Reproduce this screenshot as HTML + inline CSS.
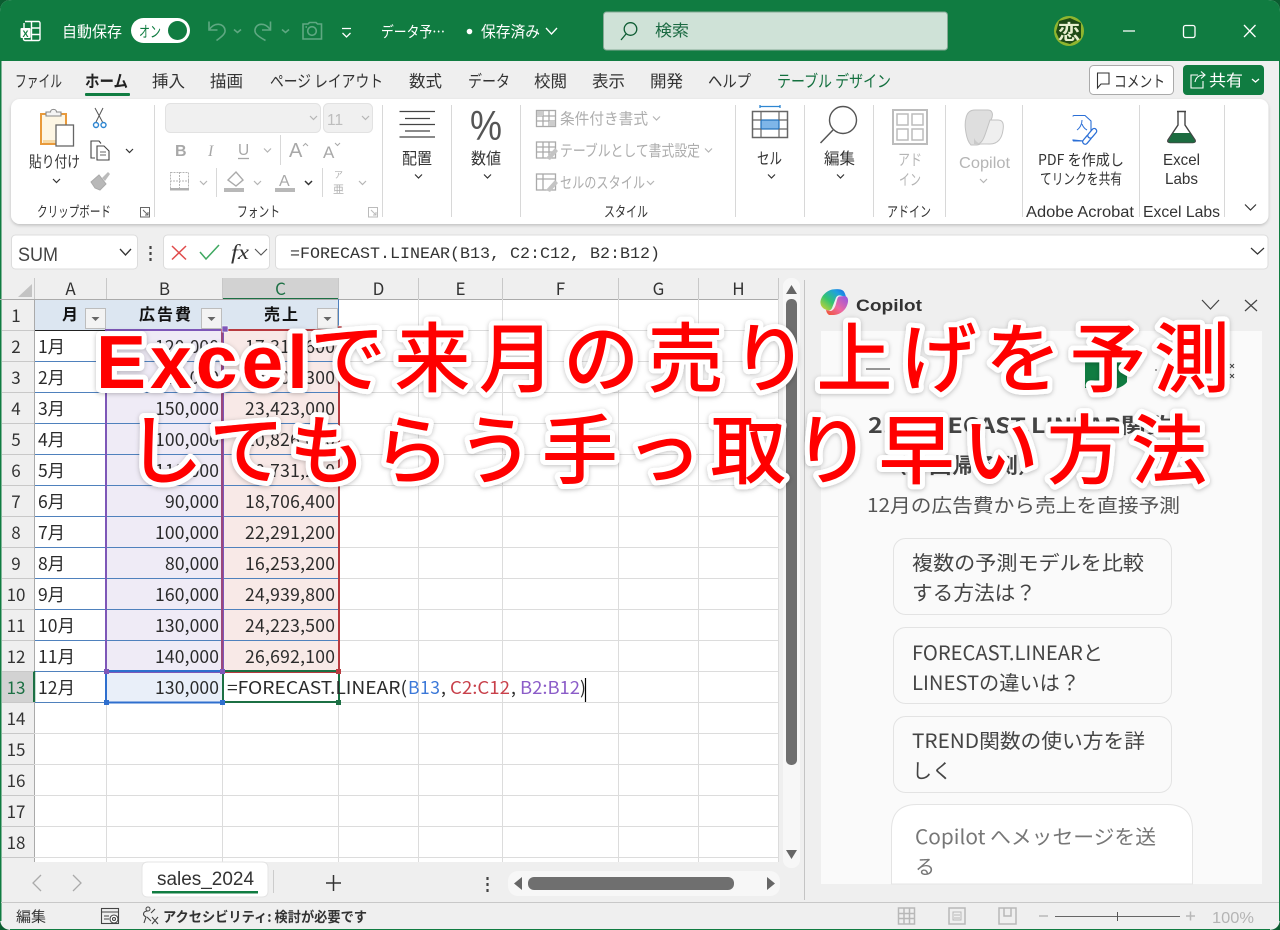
<!DOCTYPE html>
<html lang="ja"><head><meta charset="utf-8"><title>Excel</title>
<style>
html,body{margin:0;padding:0;background:#0b5c30;width:1280px;height:930px;overflow:hidden}
svg{display:block}
text{font-family:"Liberation Sans","Noto Sans CJK JP",sans-serif;white-space:pre}
.j{font-family:"Noto Sans CJK JP","Liberation Sans",sans-serif}
.c{font-family:"Noto Sans CJK JP","Liberation Sans",sans-serif;font-size:17.5px;fill:#2a2a2a}
.h{font-family:"Noto Sans CJK JP","Liberation Sans",sans-serif;font-size:17px;fill:#333;text-anchor:middle}
.rh{font-family:"Noto Sans CJK JP","Liberation Sans",sans-serif;font-size:17px;fill:#333;text-anchor:middle}
.gl{stroke:#dcdcdc;stroke-width:1;fill:none}
.ch{fill:none;stroke:#333;stroke-width:1.2}
.chg{fill:none;stroke:#b5b5b5;stroke-width:1.2}
.ttl{font-family:"Noto Sans CJK JP","Liberation Sans",sans-serif;font-weight:500;font-size:76px;fill:#ff0000;stroke:#fff;stroke-width:10px;stroke-linejoin:round;paint-order:stroke fill}
</style></head><body>
<svg xmlns="http://www.w3.org/2000/svg" width="1280" height="930" viewBox="0 0 1280 930">
<defs>
<filter id="sh" x="-5%" y="-10%" width="110%" height="125%"><feDropShadow dx="0" dy="1.5" stdDeviation="1.5" flood-color="#000" flood-opacity=".2"/></filter>
<filter id="tsh" x="-5%" y="-20%" width="110%" height="140%"><feDropShadow dx="0" dy="1" stdDeviation="2.500" flood-color="#000" flood-opacity=".25"/></filter>
<linearGradient id="cg1" x1="0" y1="1" x2="1" y2="0"><stop offset="0" stop-color="#e2d22e"/><stop offset=".4" stop-color="#35c56f"/><stop offset=".75" stop-color="#1f9fe0"/><stop offset="1" stop-color="#1d62e6"/></linearGradient>
<linearGradient id="cg2" x1="0" y1="1" x2="1" y2="0"><stop offset="0" stop-color="#f0532d"/><stop offset=".45" stop-color="#ee6aa0"/><stop offset="1" stop-color="#8f55e6"/></linearGradient>
</defs>

<!-- window body -->
<path d="M12 0H1268Q1280 0 1280 12V918Q1280 930 1268 930H12Q0 930 0 918V12Q0 0 12 0Z" fill="#efefef"/>
<path d="M12 0H1268Q1280 0 1280 12V61H0V12Q0 0 12 0Z" fill="#107c41"/>
<rect x="0" y="61" width="1.5" height="860" fill="#107c41"/>
<rect x="1279" y="61" width="1" height="860" fill="#107c41"/>
<rect x="10" y="929" width="1260" height="1" fill="#107c41"/>

<!-- title bar -->
<g fill="none" stroke="#fff" stroke-width="1.4"><path d="M25 21.500H38.500a1.500 1.500 0 0 1 1.500 1.500V39a1.500 1.500 0 0 1-1.500 1.500H25a1.500 1.500 0 0 1-1.500-1.500V35"/><path d="M24 28V23M31.500 21.500V40.500M31.500 28H40M31.500 34.500H40"/></g>
<rect x="20.500" y="28" width="10" height="10" rx="1" fill="#fff"/><text x="22.500" y="37" font-size="9" font-weight="700" fill="#107c41">X</text>
<text class="j" x="62" y="37" font-size="15.500" fill="#fff" textLength="60" lengthAdjust="spacingAndGlyphs">自動保存</text>
<rect x="131" y="18" width="59" height="25" rx="12.500" fill="#fff"/>
<text class="j" x="139" y="37" font-size="15.500" fill="#107c41" textLength="22" lengthAdjust="spacingAndGlyphs">オン</text>
<circle cx="177.500" cy="30.500" r="9.500" fill="#107c41"/>
<g fill="none" stroke="#5fa882" stroke-width="1.6"><path d="M209 21.500V30H217.500"/><path d="M209.500 29.500C214 22 224 23 225 30C225.500 33 223.500 35.500 216.500 40.500"/><path d="M270.500 21.500V30H262"/><path d="M270 29.500C265.500 22 255.500 23 255 30C254.500 33 256.500 35.500 265.500 40.500"/>
<path d="M303 24H308L309.500 22.500H316L317.500 24H321.500V39H303Z"/><circle cx="312" cy="31" r="4.300"/><path d="M305.500 27H307"/><path d="M234 29.500L237.500 32.500L241 29.500M282 29.500L285.500 32.500L289 29.500"/></g>
<path d="M342 28.500H351M342.500 33L346.500 37L350.500 33" fill="none" stroke="#fff" stroke-width="1.300"/>
<text class="j" x="381" y="37" font-size="15" fill="#fff" textLength="64" lengthAdjust="spacingAndGlyphs">データ予…</text>
<circle cx="469.500" cy="31.500" r="2.800" fill="#fff"/>
<text class="j" x="481" y="37" font-size="15.500" fill="#fff" textLength="59" lengthAdjust="spacingAndGlyphs">保存済み</text>
<path d="M546 28L551.500 34L557 28" fill="none" stroke="#fff" stroke-width="1.300"/>
<rect x="603.500" y="12" width="344" height="38" rx="3" fill="#cfe2d7" stroke="#86a995" stroke-width="1"/>
<circle cx="630.500" cy="29" r="6.300" fill="none" stroke="#0e5c33" stroke-width="1.300"/><path d="M626 34L621 40" stroke="#0e5c33" stroke-width="1.300"/>
<text class="j" x="655" y="36" font-size="16" fill="#1b6a42" textLength="34" lengthAdjust="spacingAndGlyphs">検索</text>
<circle cx="1069" cy="31" r="15" fill="#8fb52f"/><path d="M1059 21L1070 18L1081 23L1081 38L1070 44L1060 41L1056 32Z" fill="#1e4a15"/>
<text class="j" x="1058" y="39" font-size="20" font-weight="700" fill="#e8efcf" textLength="22" lengthAdjust="spacingAndGlyphs">恋</text>
<path d="M1123 31H1135M1244 25L1255.500 37M1255.500 25L1244 37" stroke="#fff" stroke-width="1.300" fill="none"/>
<rect x="1183.500" y="25.500" width="11.500" height="12" rx="2" fill="none" stroke="#fff" stroke-width="1.300"/>

<!-- tabs -->
<text class="j" x="15" y="87" font-size="16.500" fill="#333" textLength="47" lengthAdjust="spacingAndGlyphs">ファイル</text>
<text class="j" x="85" y="87" font-size="16.500" font-weight="700" fill="#222" textLength="43" lengthAdjust="spacingAndGlyphs">ホーム</text>
<text class="j" x="152" y="87" font-size="16.500" fill="#333" textLength="33" lengthAdjust="spacingAndGlyphs">挿入</text>
<text class="j" x="210" y="87" font-size="16.500" fill="#333" textLength="33" lengthAdjust="spacingAndGlyphs">描画</text>
<text class="j" x="270" y="87" font-size="16.500" fill="#333" textLength="113" lengthAdjust="spacingAndGlyphs">ページ レイアウト</text>
<text class="j" x="409" y="87" font-size="16.500" fill="#333" textLength="33" lengthAdjust="spacingAndGlyphs">数式</text>
<text class="j" x="468" y="87" font-size="16.500" fill="#333" textLength="42" lengthAdjust="spacingAndGlyphs">データ</text>
<text class="j" x="534" y="87" font-size="16.500" fill="#333" textLength="33" lengthAdjust="spacingAndGlyphs">校閲</text>
<text class="j" x="592" y="87" font-size="16.500" fill="#333" textLength="33" lengthAdjust="spacingAndGlyphs">表示</text>
<text class="j" x="650" y="87" font-size="16.500" fill="#333" textLength="33" lengthAdjust="spacingAndGlyphs">開発</text>
<text class="j" x="708" y="87" font-size="16.500" fill="#333" textLength="43" lengthAdjust="spacingAndGlyphs">ヘルプ</text>
<text class="j" x="777" y="87" font-size="16.500" fill="#14703f" textLength="114" lengthAdjust="spacingAndGlyphs">テーブル デザイン</text>
<rect x="85" y="93" width="45" height="3" rx="1" fill="#107c41"/>
<rect x="1089.500" y="65.500" width="84" height="29" rx="4" fill="#fff" stroke="#aaa"/>
<path d="M1097 73H1109V84H1101L1097.500 88V73" fill="none" stroke="#333" stroke-width="1.100"/>
<text class="j" x="1114" y="87" font-size="16" fill="#333" textLength="51" lengthAdjust="spacingAndGlyphs">コメント</text>
<rect x="1183" y="65" width="81" height="30" rx="4" fill="#107c41"/>
<path d="M1198 75H1191V88H1203V81M1195 82C1196 77 1199 75 1204 75M1201 71.500L1205 75L1201 78.500" fill="none" stroke="#fff" stroke-width="1.100"/>
<text class="j" x="1209" y="86" font-size="16" fill="#fff" textLength="34" lengthAdjust="spacingAndGlyphs">共有</text>
<path d="M1252 79L1255.500 82L1259 79" fill="none" stroke="#fff" stroke-width="1.300"/>

<!-- ribbon -->
<rect x="11" y="99" width="1257.500" height="125" rx="9" fill="#fff" filter="url(#sh)"/>
<g stroke="#d8d8d8" stroke-width="1">
<path d="M154.500 105V217M382.500 105V217M451.500 105V217M520.500 105V217M735.500 105V217M804.500 105V217M873.500 105V217M945.500 105V217M1022.500 105V217M1139.500 105V217M1224.500 105V217"/></g>
<!-- clipboard -->
<rect x="41" y="114" width="25" height="30" fill="#fdf6e4" stroke="#e99a3b" stroke-width="2"/>
<path d="M43 140H66V143H43Z" fill="#f6d9a5"/>
<path d="M46 116V112H50.500C50.500 108.500 56.500 108.500 56.500 112H61V116Z" fill="#f4f4f4" stroke="#888" stroke-width="1.100"/>
<rect x="56" y="125" width="17.500" height="21" fill="#fff" stroke="#666" stroke-width="1.300"/>
<text class="j" x="29" y="167" font-size="15.500" fill="#333" textLength="51" lengthAdjust="spacingAndGlyphs">貼り付け</text>
<path class="ch" d="M53 179L56.500 182.500L60 179"/>
<path d="M95 108L102.500 122M103 108L96 122" stroke="#555" stroke-width="1" fill="none"/><circle cx="96" cy="125" r="2.500" fill="#fff" stroke="#2e86d1" stroke-width="1.400"/><circle cx="103.500" cy="125" r="2.500" fill="#fff" stroke="#2e86d1" stroke-width="1.400"/>
<path d="M95 158H91V141H99L101 143.500" fill="#fff" stroke="#444" stroke-width="1.100"/><path d="M97 146H104L109 151V160H97Z" fill="#fff" stroke="#444" stroke-width="1.100"/><path d="M100 152H106M100 155H106" stroke="#666"/>
<path class="ch" d="M126 149L129.500 152.500L133 149"/>
<path d="M91 182L99 175L106 184L100 190L95 188Z" fill="#b8b8b8" stroke="#aaa"/><path d="M102 178L108 172L110 174L105 181" fill="#bbb"/>
<text class="j" x="37" y="217" font-size="14.500" fill="#333" textLength="74" lengthAdjust="spacingAndGlyphs">クリップボード</text>
<path d="M140.500 207.500H149.500V217H140.500Z M143 210L148 215M148 212V215H145" fill="none" stroke="#666"/>
<!-- font group -->
<rect x="165.500" y="103.500" width="155" height="29" rx="5" fill="#f0f0f0" stroke="#e2e2e2"/>
<rect x="323.500" y="103.500" width="49" height="29" rx="5" fill="#f0f0f0" stroke="#e2e2e2"/>
<text x="327" y="125" font-size="15.500" fill="#bdbdbd">11</text>
<path class="chg" d="M310 116L313.500 119.500L317 116M362 116L365.500 119.500L369 116"/>
<text x="175" y="156" font-size="16" font-weight="700" fill="#a8a8a8">B</text>
<text x="208" y="156" font-size="16" font-style="italic" fill="#a8a8a8" style="font-family:'Liberation Serif',serif">I</text>
<text x="238" y="155" font-size="15.500" fill="#a8a8a8">U</text><path d="M238 158.500H249" stroke="#a8a8a8" stroke-width="1.300"/>
<path class="chg" d="M264 148.500L267.500 152L271 148.500M200 181L203.500 184.500L207 181M254 181L257.500 184.500L261 181M359 181L362.500 184.500L366 181"/>
<path d="M280.500 135V165" stroke="#d8d8d8"/>
<text x="289" y="157" font-size="20" fill="#a8a8a8">A</text><path d="M303 146L305.500 143.500L308 146" fill="none" stroke="#a8a8a8"/>
<text x="323" y="158" font-size="17" fill="#a8a8a8">A</text><path d="M335 143L337.500 145.500L340 143" fill="none" stroke="#a8a8a8"/>
<rect x="170.500" y="172.500" width="18" height="17" fill="none" stroke="#b5b5b5" stroke-dasharray="2 1"/><path d="M179.500 172V190M170 181H189" stroke="#b5b5b5" stroke-dasharray="2 1"/><rect x="170" y="188" width="19" height="2.500" fill="#b0b0b0"/>
<path d="M216.500 168V197" stroke="#d8d8d8"/>
<path d="M228 180L236 172L243 180L236 186Z" fill="#fff" stroke="#aaa" stroke-width="1.400"/><rect x="224" y="188" width="20" height="4" fill="#b8b8b8"/>
<text x="279" y="186" font-size="16" fill="#a8a8a8">A</text><rect x="275" y="188" width="20" height="4" fill="#b8b8b8"/>
<path class="ch" style="stroke-width:1.500" d="M305 181L308.500 184.500L312 181"/>
<path d="M322.500 168V197" stroke="#d8d8d8"/>
<text class="j" x="334" y="178" font-size="9" fill="#b0b0b0">ア</text><text class="j" x="333" y="193" font-size="11" fill="#b0b0b0">亜</text>
<text class="j" x="237" y="217" font-size="14.500" fill="#333" textLength="43" lengthAdjust="spacingAndGlyphs">フォント</text>
<path d="M368.500 207.500H377.500V217H368.500Z M371 210L376 215M376 212V215H373" fill="none" stroke="#bbb"/>
<!-- alignment / number -->
<path d="M399.500 111.500H435M405 118.500H430M399.500 124.500H435M405 131H430M399.500 137H435" stroke="#444" stroke-width="1.200" fill="none"/>
<text class="j" x="402" y="164" font-size="16" fill="#333" textLength="30" lengthAdjust="spacingAndGlyphs">配置</text>
<path class="ch" d="M415 174.500L418.500 178L422 174.500"/>
<text x="470" y="140" font-size="42" fill="#555" textLength="32" lengthAdjust="spacingAndGlyphs">%</text>
<text class="j" x="471" y="164" font-size="16" fill="#333" textLength="30" lengthAdjust="spacingAndGlyphs">数値</text>
<path class="ch" d="M484 174.500L487.500 178L491 174.500"/>
<!-- styles -->
<g fill="none" stroke="#aaa" stroke-width="1.300"><rect x="536.500" y="110.500" width="19" height="16"/><path d="M536 116H556M536 121H556M543 110V127M549 110V127"/><rect x="536.500" y="142" width="19" height="16"/><path d="M536 147H556M536 152H556M543 142V158M549 142V158"/><rect x="536.500" y="174" width="19" height="16"/><path d="M536 179H556M543 174V190"/></g>
<rect x="537" y="111" width="6" height="5" fill="#ccc"/><rect x="549" y="121" width="6" height="5" fill="#ccc"/>
<path d="M546 158L555 148L558 151L550 160Z M546 190L555 180L558 183L550 192Z" fill="#c4c4c4"/>
<text class="j" x="560" y="124" font-size="15.500" fill="#adadad" textLength="88" lengthAdjust="spacingAndGlyphs">条件付き書式</text>
<text class="j" x="560" y="156" font-size="15.500" fill="#adadad" textLength="140" lengthAdjust="spacingAndGlyphs">テーブルとして書式設定</text>
<text class="j" x="560" y="188" font-size="15.500" fill="#adadad" textLength="85" lengthAdjust="spacingAndGlyphs">セルのスタイル</text>
<path class="chg" d="M653 116.500L656.500 120L660 116.500M705 148.500L708.500 152L712 148.500M647 181L650.500 184.500L654 181"/>
<text class="j" x="604" y="217" font-size="14.500" fill="#333" textLength="44" lengthAdjust="spacingAndGlyphs">スタイル</text>
<!-- cells -->
<path d="M760 106.500H780M760 105V108M780 105V108" stroke="#2e86d1" stroke-width="1.300" fill="none"/>
<rect x="752.500" y="111.500" width="35" height="26" fill="#fff" stroke="#666" stroke-width="1.500"/><rect x="761" y="120" width="18" height="9" fill="#7eb6e8" stroke="#1f6fb8" stroke-width="1.200"/><path d="M752 120H761M779 120H788M752 129H761M779 129H788M761 111V120M779 111V120M761 129V138M779 129V138" stroke="#666" stroke-width="1.200"/>
<text class="j" x="757" y="164" font-size="16" fill="#333" textLength="25" lengthAdjust="spacingAndGlyphs">セル</text>
<path class="ch" d="M768 174.500L771.500 178L775 174.500"/>
<circle cx="843" cy="120" r="13.500" fill="#fff" stroke="#555" stroke-width="1.400"/><path d="M833 130L820.500 143" stroke="#555" stroke-width="1.500"/>
<text class="j" x="824" y="164" font-size="16" fill="#333" textLength="31" lengthAdjust="spacingAndGlyphs">編集</text>
<path class="ch" d="M837 174.500L840.500 178L844 174.500"/>
<!-- addin -->
<rect x="893" y="110" width="34" height="34" fill="none" stroke="#bcbcbc" stroke-width="2"/><rect x="897" y="114" width="11" height="11" fill="none" stroke="#bcbcbc" stroke-width="1.500"/><rect x="912" y="114" width="11" height="11" fill="none" stroke="#bcbcbc" stroke-width="1.500"/><rect x="897" y="129" width="11" height="11" fill="none" stroke="#bcbcbc" stroke-width="1.500"/><rect x="912" y="129" width="11" height="11" fill="none" stroke="#bcbcbc" stroke-width="1.500"/>
<text class="j" x="898" y="165" font-size="15.500" fill="#b5b5b5" textLength="24" lengthAdjust="spacingAndGlyphs">アド</text>
<text class="j" x="899" y="185" font-size="15.500" fill="#b5b5b5" textLength="22" lengthAdjust="spacingAndGlyphs">イン</text>
<text class="j" x="887" y="217" font-size="14.500" fill="#333" textLength="44" lengthAdjust="spacingAndGlyphs">アドイン</text>
<!-- copilot disabled -->
<path d="M975 110H988C992 110 994 114 991 120L983 140C981 145 978 145 975 145H971C966 140 964 125 966 118C967 113 970 110 975 110Z" fill="#dedede" stroke="#c2c2c2"/>
<path d="M990 120H998C1003 120 1004 124 1003 130C1002 138 998 144 990 144H978C982 143 984 138 986 132Z" fill="#efefef" stroke="#c2c2c2"/>
<path d="M974 138C977 145 985 145 988 144H974Z" fill="#c9c9c9"/>
<text x="959" y="168" font-size="16" fill="#b5b5b5" textLength="51" lengthAdjust="spacingAndGlyphs">Copilot</text>
<path class="chg" d="M980 179L983.500 182.500L987 179"/>
<!-- pdf -->
<path d="M1073 116.500Q1073 115.500 1074 115.500H1085L1091 121V134M1084 141H1074Q1073 141 1073 140Z" fill="#fff" stroke="#2b6fd6" stroke-width="1.100"/>
<path d="M1077 130C1080 128 1082 124 1082 120M1082 124C1083 127 1085 129 1087 130" fill="none" stroke="#2b6fd6"/>
<g transform="rotate(-50 1090 136)" fill="#fff" stroke="#2b6fd6" stroke-width="1.300"><rect x="1080" y="133.500" width="11" height="5" rx="2.500"/><rect x="1088" y="133.500" width="11" height="5" rx="2.500"/></g>
<text x="1038" y="165" font-size="15" class="j" fill="#333" textLength="86" lengthAdjust="spacingAndGlyphs">PDF を作成し</text>
<text x="1040" y="184" font-size="15" class="j" fill="#333" textLength="82" lengthAdjust="spacingAndGlyphs">てリンクを共有</text>
<text x="1026" y="217" font-size="15.500" fill="#333" textLength="108" lengthAdjust="spacingAndGlyphs">Adobe Acrobat</text>
<!-- labs -->
<path d="M1177 111.500H1186M1178 112V125L1168 140Q1167 142.500 1170 142.500H1193Q1196 142.500 1195 140L1185 125V112" fill="none" stroke="#444" stroke-width="1.400"/>
<path d="M1173 133H1190L1195 141Q1195 142.500 1193 142.500H1170Q1168 142.500 1168.500 140.500Z" fill="#1c6b40"/>
<text x="1163" y="165" font-size="16" fill="#333" textLength="37" lengthAdjust="spacingAndGlyphs">Excel</text>
<text x="1165" y="184" font-size="16" fill="#333" textLength="33" lengthAdjust="spacingAndGlyphs">Labs</text>
<text x="1143" y="217" font-size="15.500" fill="#333" textLength="77" lengthAdjust="spacingAndGlyphs">Excel Labs</text>
<path d="M1245 204.500L1250.500 210L1256 204.500" fill="none" stroke="#333" stroke-width="1.200"/>

<!-- formula bar -->
<rect x="11.500" y="235" width="126" height="34" rx="4" fill="#fff" stroke="#dcdcdc"/>
<text x="18" y="261" font-size="19" fill="#444" textLength="40" lengthAdjust="spacingAndGlyphs">SUM</text>
<path d="M120 249L125.500 255L131 249" fill="none" stroke="#333" stroke-width="1.300"/>
<path d="M150.500 246V249M150.500 252V255M150.500 258V261" stroke="#444" stroke-width="2.200"/>
<rect x="163.500" y="235" width="106" height="34" rx="4" fill="#fff" stroke="#dcdcdc"/>
<path d="M172 246L186 259.500M186 246L172 259.500" stroke="#e04b4b" stroke-width="1.500"/>
<path d="M200 252L206 259L219 245" fill="none" stroke="#3ea860" stroke-width="1.500"/>
<text x="231" y="259" font-size="21" font-style="italic" fill="#333" style="font-family:'Liberation Serif',serif" textLength="18" lengthAdjust="spacingAndGlyphs">fx</text>
<path d="M255 249L261 255L267 249" fill="none" stroke="#555" stroke-width="1.100"/>
<rect x="275.500" y="235" width="992.500" height="34" rx="4" fill="#fff" stroke="#dcdcdc"/>
<text x="290" y="258" font-size="16" fill="#333" textLength="370" lengthAdjust="spacingAndGlyphs" style="font-family:'Liberation Mono',monospace">=FORECAST.LINEAR(B13, C2:C12, B2:B12)</text>
<path d="M1251 248L1257.500 254L1264 248" fill="none" stroke="#333" stroke-width="1.200"/>

<!-- sheet -->
<rect x="2" y="278" width="776" height="21" fill="#efefef"/>
<rect x="34" y="299" width="745" height="563" fill="#fff"/>
<rect x="2" y="299" width="32" height="563" fill="#efefef"/>
<rect x="222" y="278" width="116" height="21" fill="#d2d2d2"/>
<rect x="222" y="298" width="116" height="2" fill="#1c7044"/>
<rect x="2" y="671" width="32" height="31" fill="#d2d2d2"/>
<rect x="33" y="671" width="2" height="31" fill="#1c7044"/>
<path d="M32 284V297H18Z" fill="#c3c3c3"/>
<g stroke="#c8c8c8"><path d="M34.500 278V299M106.500 278V299M222.500 278V299M338.500 278V299M418.500 278V299M502.500 278V299M618.500 278V299M698.500 278V299M778.500 278V299"/></g>
<path d="M0 299.500H778" stroke="#aaa"/><path d="M34.500 299V862" stroke="#aaa"/>
<g class="gl"><path d="M338 330.500H778M338 361.500H778M338 392.500H778M338 423.500H778M338 454.500H778M338 485.500H778M338 516.500H778M338 547.500H778M338 578.500H778M338 609.500H778M338 640.500H778M338 671.500H778M338 702.500H778M34 733.500H778M34 764.500H778M34 795.500H778M34 826.500H778M34 857.500H778"/>
<path d="M106.500 702V862M222.500 702V862M338.500 702V862M418.500 299V862M502.500 299V862M618.500 299V862M698.500 299V862M778.500 299V862"/></g>
<g stroke="#c8c8c8"><path d="M2 330.500H34M2 361.500H34M2 392.500H34M2 423.500H34M2 454.500H34M2 485.500H34M2 516.500H34M2 547.500H34M2 578.500H34M2 609.500H34M2 640.500H34M2 671.500H34M2 702.500H34M2 733.500H34M2 764.500H34M2 795.500H34M2 826.500H34M2 857.500H34"/></g>
<!-- table fills -->
<rect x="35" y="300" width="304" height="30" fill="#dce6f1"/>
<path d="M35 330.500H106" stroke="#222"/>
<rect x="107" y="331" width="115" height="340" fill="#efebf6"/>
<rect x="223" y="331" width="115" height="340" fill="#f8e9e7"/>
<rect x="107" y="672" width="115" height="30" fill="#e9eff9"/>
<g stroke="#4f81bd"><path d="M35 361.500H339M35 392.500H339M35 423.500H339M35 454.500H339M35 485.500H339M35 516.500H339M35 547.500H339M35 578.500H339M35 609.500H339M35 640.500H339M35 671.500H339M35 702.500H106"/></g>
<path d="M338.500 299V331" stroke="#4f81bd"/>
<rect x="106" y="330" width="117" height="342" fill="none" stroke="#7e57b8" stroke-width="2"/>
<rect x="222" y="330" width="117" height="342" fill="none" stroke="#b83a3f" stroke-width="2"/>
<path d="M222 331V671" stroke="#7e57b8" stroke-width="1"/>
<rect x="106" y="671" width="117" height="31.500" fill="none" stroke="#2f6fce" stroke-width="2"/>
<path d="M223 671H339V702H223V671" fill="none" stroke="#1c7044" stroke-width="2"/>
<path d="M34.500 671V702" stroke="#1c7044" stroke-width="1.500"/>
<rect x="222" y="326" width="6" height="6" fill="#7e57b8" stroke="#fff" stroke-width=".6"/>
<rect x="336" y="326" width="6" height="6" fill="#b83a3f" stroke="#fff" stroke-width=".6"/>
<rect x="104" y="669" width="5" height="5" fill="#7e57b8"/><rect x="220" y="669" width="5" height="5" fill="#7e57b8"/><rect x="336" y="669" width="5" height="5" fill="#b83a3f"/>
<rect x="104" y="700" width="5" height="5" fill="#2f6fce"/><rect x="220" y="700" width="5" height="5" fill="#2f6fce"/><rect x="336" y="700" width="5" height="5" fill="#1c7044"/>
<!-- filter buttons -->
<g fill="#f3f3f3" stroke="#bdbdbd"><rect x="85.500" y="308.500" width="20" height="20"/><rect x="201.500" y="308.500" width="20" height="20"/><rect x="317.500" y="308.500" width="20" height="20"/></g>
<path d="M91.500 317H99.500L95.500 321ZM207.500 317H215.500L211.500 321ZM323.500 317H331.500L327.500 321Z" fill="#666"/>
<!-- headers -->
<text class="h" x="70.500" y="295">A</text><text class="h" x="164.500" y="295">B</text><text class="h" x="280.500" y="295" style="fill:#1c7044">C</text><text class="h" x="378.500" y="295">D</text><text class="h" x="460.500" y="295">E</text><text class="h" x="560.500" y="295">F</text><text class="h" x="658.500" y="295">G</text><text class="h" x="738.500" y="295">H</text>
<text class="rh" x="16" y="322">1</text><text class="rh" x="16" y="353">2</text><text class="rh" x="16" y="384">3</text><text class="rh" x="16" y="415">4</text><text class="rh" x="16" y="446">5</text><text class="rh" x="16" y="477">6</text><text class="rh" x="16" y="508">7</text><text class="rh" x="16" y="539">8</text><text class="rh" x="16" y="570">9</text><text class="rh" x="16" y="601">10</text><text class="rh" x="16" y="632">11</text><text class="rh" x="16" y="663">12</text><text class="rh" x="16" y="694" style="fill:#1c7044">13</text><text class="rh" x="16" y="725">14</text><text class="rh" x="16" y="756">15</text><text class="rh" x="16" y="787">16</text><text class="rh" x="16" y="818">17</text><text class="rh" x="16" y="849">18</text>
<text class="j" x="62" y="320" font-size="16" font-weight="700" fill="#111" textLength="16" lengthAdjust="spacingAndGlyphs">月</text>
<text class="j" x="139" y="320" font-size="16" font-weight="700" fill="#111" textLength="52" lengthAdjust="spacing">広告費</text>
<text class="j" x="264" y="320" font-size="16" font-weight="700" fill="#111" textLength="34" lengthAdjust="spacing">売上</text>
<text class="c" x="38" y="353" textLength="27">1月</text><text class="c" x="38" y="384" textLength="27">2月</text><text class="c" x="38" y="415" textLength="27">3月</text><text class="c" x="38" y="446" textLength="27">4月</text><text class="c" x="38" y="477" textLength="27">5月</text><text class="c" x="38" y="508" textLength="27">6月</text><text class="c" x="38" y="539" textLength="27">7月</text><text class="c" x="38" y="570" textLength="27">8月</text><text class="c" x="38" y="601" textLength="27">9月</text><text class="c" x="38" y="632" textLength="37">10月</text><text class="c" x="38" y="663" textLength="37">11月</text><text class="c" x="38" y="694" textLength="37">12月</text>
<text class="c" x="155" y="353" textLength="64">120,000</text><text class="c" x="155" y="384" textLength="64">110,000</text><text class="c" x="155" y="415" textLength="64">150,000</text><text class="c" x="155" y="446" textLength="64">100,000</text><text class="c" x="155" y="477" textLength="64">110,000</text><text class="c" x="165" y="508" textLength="54">90,000</text><text class="c" x="155" y="539" textLength="64">100,000</text><text class="c" x="165" y="570" textLength="54">80,000</text><text class="c" x="155" y="601" textLength="64">160,000</text><text class="c" x="155" y="632" textLength="64">130,000</text><text class="c" x="155" y="663" textLength="64">140,000</text><text class="c" x="155" y="694" textLength="64">130,000</text>
<text class="c" x="245" y="353" textLength="90">17,316,600</text><text class="c" x="245" y="384" textLength="90">20,004,300</text><text class="c" x="245" y="415" textLength="90">23,423,000</text><text class="c" x="245" y="446" textLength="90">20,826,000</text><text class="c" x="245" y="477" textLength="90">20,731,200</text><text class="c" x="245" y="508" textLength="90">18,706,400</text><text class="c" x="245" y="539" textLength="90">22,291,200</text><text class="c" x="245" y="570" textLength="90">16,253,200</text><text class="c" x="245" y="601" textLength="90">24,939,800</text><text class="c" x="245" y="632" textLength="90">24,223,500</text><text class="c" x="245" y="663" textLength="90">26,692,100</text>
<text class="c" x="227" y="694" textLength="180" lengthAdjust="spacingAndGlyphs">=FORECAST.LINEAR(</text>
<text class="c" x="408" y="694" style="fill:#3b78d8" textLength="32">B13</text><text class="c" x="441" y="694">,</text>
<text class="c" x="450" y="694" style="fill:#c8404a" textLength="60" lengthAdjust="spacingAndGlyphs">C2:C12</text><text class="c" x="511" y="694">,</text>
<text class="c" x="520" y="694" style="fill:#8b5cc8" textLength="60" lengthAdjust="spacingAndGlyphs">B2:B12</text><text class="c" x="580" y="694">)</text>
<path d="M585.500 678V702" stroke="#000" stroke-width="1.200"/>

<!-- tab bar -->
<rect x="2" y="862" width="800" height="40" fill="#efefef"/>
<path d="M142 868Q142 862 148 862H262Q268 862 268 868V891Q268 897 262 897H148Q142 897 142 891Z" fill="#fff" stroke="#e4e4e4"/>
<text x="157" y="885" font-size="19" fill="#333" textLength="97" lengthAdjust="spacingAndGlyphs">sales_2024</text>
<rect x="152" y="891" width="106" height="2.500" fill="#107c41"/>
<path d="M41 875L33 883L41 891M73 875L81 883L73 891" fill="none" stroke="#aaa" stroke-width="1.300"/>
<path d="M273.500 870V893" stroke="#ccc"/>
<path d="M326 883H341M333.500 875V891" stroke="#333" stroke-width="1.500"/>
<path d="M487.500 877V880M487.500 883V886M487.500 889V892" stroke="#444" stroke-width="2.200"/>
<rect x="508" y="871" width="272" height="25" rx="10" fill="#f7f7f7"/>
<rect x="528" y="877" width="206" height="13" rx="6" fill="#6f6f6f"/>
<path d="M522 877V890L514 883.500ZM767 877V890L775 883.500Z" fill="#666"/>
<!-- vertical scrollbar -->
<rect x="783" y="278" width="17" height="590" rx="8" fill="#f7f7f7"/>
<rect x="786" y="299" width="11" height="466" rx="5" fill="#6f6f6f"/>
<path d="M786 294H797L791.500 285ZM786 850H797L791.500 859Z" fill="#666"/>
<path d="M804.500 280V900" stroke="#c4c4c4"/>

<!-- copilot pane -->
<path d="M832 289.500C836 289 841 288.500 843.500 291C845 293 845.500 295 846 297L840.500 295.500C838 295 836.500 296 835.500 299L832 308C830.500 311.500 827 310.500 824.500 309C821.500 307.500 820 304 820.500 301C821.500 296 826 291 832 289.500Z" fill="url(#cg1)"/>
<path d="M839 296.500L845 296C848.500 297 848.500 301 847.500 304C846 309.500 841 314.500 834 315L829 315C827 313.500 826.500 312 826 310L831 311C833.500 310 834.500 308 835.500 305.500L837 300C837.500 298 838 297 839 296.500Z" fill="url(#cg2)"/>
<text x="856" y="311" font-size="17" font-weight="700" fill="#333" textLength="66" lengthAdjust="spacingAndGlyphs">Copilot</text>
<path d="M1202 300L1210.500 309L1219 300M1245 300L1257 311M1257 300L1245 311" fill="none" stroke="#444" stroke-width="1.200"/>
<rect x="821" y="331" width="441" height="553" fill="#fafafa"/>
<path d="M866 369H890M866 378H890M866 386H884" stroke="#333" stroke-width="1"/>
<path d="M1085 362H1127V382C1120 392 1095 392 1088 388H1085Z" fill="#107c41"/>
<path d="M1155 370h2M1230 364l4 4M1234 364l-4 4M1230 374l4 4M1234 374l-4 4" stroke="#444"/>
<text class="j" x="868" y="433" font-size="21" font-weight="700" fill="#444" textLength="303" lengthAdjust="spacingAndGlyphs">2. FORECAST.LINEAR関数</text>
<text class="j" x="885" y="473" font-size="21" font-weight="700" fill="#444" textLength="155" lengthAdjust="spacingAndGlyphs">（単回帰予測）</text>
<text class="j" x="867" y="512" font-size="19" fill="#555" textLength="313" lengthAdjust="spacingAndGlyphs">12月の広告費から売上を直接予測</text>
<g fill="#fafafa" stroke="#e3e3e3"><rect x="893.500" y="538.500" width="278" height="76" rx="12"/><rect x="893.500" y="627.500" width="278" height="76" rx="12"/><rect x="893.500" y="716.500" width="278" height="76" rx="12"/></g>
<text class="j" x="912" y="570" font-size="20" fill="#444" textLength="232" lengthAdjust="spacingAndGlyphs">複数の予測モデルを比較</text>
<text class="j" x="912" y="600" font-size="20" fill="#444" textLength="124" lengthAdjust="spacingAndGlyphs">する方法は？</text>
<text class="j" x="912" y="660" font-size="20" fill="#444" textLength="191" lengthAdjust="spacingAndGlyphs">FORECAST.LINEARと</text>
<text class="j" x="912" y="690" font-size="20" fill="#444" textLength="168" lengthAdjust="spacingAndGlyphs">LINESTの違いは？</text>
<text class="j" x="912" y="748" font-size="20" fill="#444" textLength="233" lengthAdjust="spacingAndGlyphs">TREND関数の使い方を詳</text>
<text class="j" x="912" y="778" font-size="20" fill="#444" textLength="40" lengthAdjust="spacingAndGlyphs">しく</text>
<path d="M891.500 884V830Q891.500 804.500 917 804.500H1167Q1192.500 804.500 1192.500 830V884Z" fill="#fff" stroke="#e4e4e4"/>
<text class="j" x="915" y="844" font-size="20" fill="#777" textLength="241" lengthAdjust="spacingAndGlyphs">Copilot へメッセージを送</text>
<text class="j" x="915" y="874" font-size="20" fill="#777" textLength="20" lengthAdjust="spacingAndGlyphs">る</text>

<!-- status bar -->
<path d="M1 902.500H1279" stroke="#c8c8c8"/>
<text class="j" x="16" y="922" font-size="14.500" fill="#333" textLength="30" lengthAdjust="spacingAndGlyphs">編集</text>
<g fill="none" stroke="#444" stroke-width="1.100"><rect x="101.500" y="908.500" width="17" height="15"/><path d="M101 912H119M104 916H109M104 919H109"/><circle cx="114" cy="919" r="4" fill="#fff"/><circle cx="114" cy="919" r="1.500"/></g>
<path d="M148 911C143 911 142 915 146 917L144 923M151 913L155 909M147 917L151 921M152 917L158 924M158 917L152 924" fill="none" stroke="#444" stroke-width="1.100"/><circle cx="148" cy="909" r="2" fill="none" stroke="#444"/>
<text class="j" x="163" y="922" font-size="14" font-weight="700" fill="#333" textLength="204" lengthAdjust="spacingAndGlyphs">アクセシビリティ: 検討が必要です</text>
<g fill="none" stroke="#b8b8b8" stroke-width="1.500">
<rect x="898.500" y="908" width="16" height="16"/><path d="M898 913.500H915M898 918.500H915M904 908V924M909.500 908V924"/>
<rect x="949" y="908" width="16" height="16"/><path d="M953 912H961V920H953ZM954 915H960M954 918H960" stroke-width="1"/>
<path d="M999 908H1016V924H999Z M1004 908V916H1011V908"/>
<path d="M1039 916H1048M1186 916H1195M1190.500 911.500V920.500"/>
</g>
<path d="M1055 916.500H1180" stroke="#666"/><path d="M1117.500 912V921" stroke="#555"/>
<text x="1212" y="923" font-size="16" fill="#b4b4b4" textLength="42" lengthAdjust="spacingAndGlyphs">100%</text>

<!-- overlay title -->
<g filter="url(#tsh)">
<text class="ttl" x="96" y="388" textLength="212" lengthAdjust="spacing" style="font-family:'Liberation Sans',sans-serif;font-weight:700;font-size:75px">Excel</text>
<text class="ttl" x="310" y="386" textLength="920" lengthAdjust="spacing">で来月の売り上げを予測</text>
<text class="ttl" x="127" y="478" textLength="1080" lengthAdjust="spacing">してもらう手っ取り早い方法</text>
</g>
</svg>
</body></html>
